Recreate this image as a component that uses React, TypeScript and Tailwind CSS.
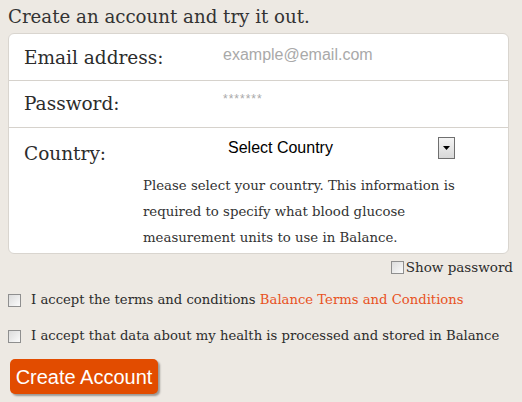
import React from 'react';

const serif = { fontFamily: '"DejaVu Serif", "Liberation Serif", serif' };
const sans = { fontFamily: '"Liberation Sans", Arial, sans-serif' };

const Check = () => (
  <span className="inline-block h-[13px] w-[13px] shrink-0 border border-[#8f8f8f] bg-gradient-to-br from-[#dcdcdc] to-[#fbfbfb]" />
);

const App = () => {
  return (
    <div className="min-h-screen w-[522px] h-[402px] overflow-hidden bg-[#ede9e3] text-[#2c2c2c]" style={serif}>
      <h1 className="px-[8px] pt-[5px] text-[18.2px] leading-[24px] text-[#333]">
        Create an account and try it out.
      </h1>

      <div className="mx-[8px] mt-[4px] w-[501px] rounded-[6px] border border-[#d9d5cf] bg-white">
        <div className="flex h-[47px] border-b border-[#d6d2cc]">
          <label className="w-[214px] pl-[15px] pt-[10px] text-[18.5px] leading-[28px]">Email address:</label>
          <span className="pt-[9px] text-[16px] text-[#a9a9a9]" style={sans}>
            example@email.com
          </span>
        </div>

        <div className="flex h-[47px] border-b border-[#d6d2cc]">
          <label className="w-[214px] pl-[15px] pt-[9px] text-[18.5px] leading-[28px]">Password:</label>
          <span className="pt-[9px] text-[12px] tracking-[1px] text-[#a9a9a9]" style={sans}>
            *******
          </span>
        </div>

        <div className="pb-[2px]">
          <div className="flex h-[45px] items-start">
            <label className="w-[134px] pl-[15px] pt-[12px] text-[18.5px] leading-[28px]">Country:</label>
            <div className="mt-[9px] ml-[85px] flex w-[227px] items-center justify-between">
              <span className="text-[16px] leading-[22px] text-black" style={sans}>
                Select Country
              </span>
              <span className="flex h-[22px] w-[17px] items-center justify-center border border-[#6f6f6f] bg-gradient-to-b from-[#f4f4f4] to-[#d8d8d8]">
                <svg width="7" height="4" viewBox="0 0 7 4">
                  <path d="M0 0h7L3.5 4z" fill="#000" />
                </svg>
              </span>
            </div>
          </div>
          <p className="ml-[134px] w-[335px] text-[13.3px] leading-[26px] text-[#333]">
            Please select your country. This information is required to specify what blood glucose measurement units
            to use in Balance.
          </p>
        </div>
      </div>

      <div className="mt-[4px] flex items-center justify-end gap-[2px] pr-[9px] text-[13.5px] leading-[18px]">
        <Check />
        <span>Show password</span>
      </div>

      <div className="mt-[15px] flex items-center gap-[10px] px-[8px] text-[13.2px] leading-[18px]">
        <Check />
        <span>
          I accept the terms and conditions{' '}
          <a href="#" className="text-[#e8521e]">
            Balance Terms and Conditions
          </a>
        </span>
      </div>

      <div className="mt-[18px] flex items-center gap-[10px] px-[8px] text-[13.2px] leading-[18px]">
        <Check />
        <span>I accept that data about my health is processed and stored in Balance</span>
      </div>

      <button
        type="button"
        className="ml-[10px] mt-[14px] h-[35px] w-[148px] rounded-[5px] bg-[#e24c00] text-[20px] text-white shadow-[2px_2px_2px_rgba(0,0,0,0.35)]"
        style={sans}
      >
        Create Account
      </button>
    </div>
  );
};

export default App;
